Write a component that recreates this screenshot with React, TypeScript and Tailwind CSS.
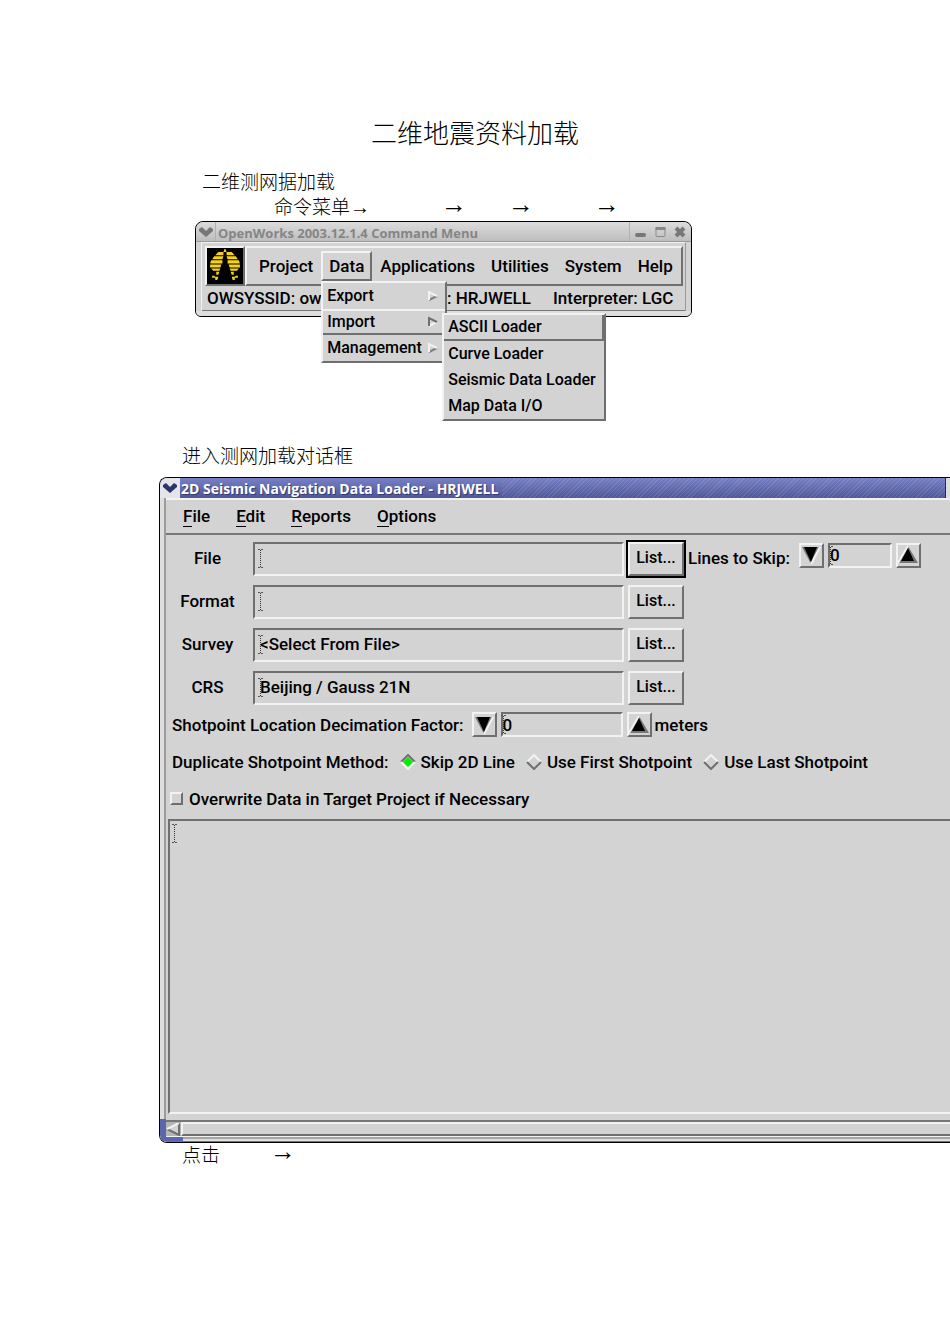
import React, { useState } from 'react';
import clsx from 'clsx';

const uiFont = 'font-[Roboto,"Liberation_Sans",sans-serif]';
const titleFont = 'font-["Open_Sans","DejaVu_Sans",sans-serif]';
const docFont = 'font-["Liberation_Serif","Noto_Sans_CJK_SC",serif]';

// Bordas 3D no estilo Motif
const raised = 'border-2 border-t-[#f2f2f2] border-l-[#f2f2f2] border-r-[#6f6f6f] border-b-[#6f6f6f]';
const sunken = 'border-2 border-t-[#6f6f6f] border-l-[#6f6f6f] border-r-[#f2f2f2] border-b-[#f2f2f2]';

const exportMenu = ['Export', 'Import', 'Management'];
const importMenu = ['ASCII Loader', 'Curve Loader', 'Seismic Data Loader', 'Map Data I/O'];
const methods = ['Skip 2D Line', 'Use First Shotpoint', 'Use Last Shotpoint'];

const Chevron: React.FC<{ className: string }> = ({ className }) => (
  <svg viewBox="0 0 14 10" className={clsx('h-[10px] w-[14px]', className)} aria-hidden>
    <path d="M0 2 3 0 7 4 11 0 14 2V4L7 10 0 4Z" fill="currentColor" />
  </svg>
);

const Logo = () => (
  <svg viewBox="0 0 35 35" className="h-full w-full" aria-hidden>
    <rect width="35" height="35" fill="#000" />
    <g fill="#f5d11c">
      <path d="M17 1h1l1 3h-3z" />
      <path d="M11 4h5v3H8zM19 4h5l3 3h-8z" />
      <path d="M7 8h9l-1 3H5zM19 8h9l2 3H20z" />
      <path d="M4 12h11v3H3zM20 12h11l1 3H20z" />
      <path d="M3 16h11l-1 3H3zM21 16h11v3H22z" />
      <path d="M4 20h9l-1 2H6zM22 20h9l-2 2h-6z" />
      <path d="M9 23h3l-1 3H9zM23 23h3v3h-2z" />
      <path d="M5 27h2l1 1h3l-1 3H8v-2H5zM30 27h-2l-1 1h-3l1 3h2v-2h3z" />
    </g>
  </svg>
);

const MenuArrow: React.FC<{ pressed?: boolean }> = ({ pressed }) => (
  <svg viewBox="0 0 10 12" className="h-3 w-[10px] shrink-0" fill="none" strokeWidth="2" aria-hidden>
    <path d="M9 6 1 10" stroke={pressed ? '#f2f2f2' : '#808080'} />
    <path d="M1 10V2L9 6" stroke={pressed ? '#6f6f6f' : '#f2f2f2'} />
  </svg>
);

const Caret: React.FC<{ className?: string }> = ({ className }) => (
  <svg viewBox="0 0 5 19" className={clsx('pointer-events-none absolute h-[19px] w-[5px]', className)} aria-hidden>
    <path d="M2.5 1V18" stroke="#333" strokeDasharray="1 1" />
    <path d="M0 .5H2M3 .5H5M0 18.5H2M3 18.5H5" stroke="#555" />
  </svg>
);

const StepButton: React.FC<{ up?: boolean; label: string; onClick: () => void }> = ({ up, label, onClick }) => (
  <button type="button" aria-label={label} onClick={onClick} className={clsx('flex h-[25px] w-[25px] shrink-0 items-center justify-center', raised)}>
    <svg viewBox="0 0 20 20" className="h-5 w-5" aria-hidden>
      {up ? (
        <>
          <path d="M10 1 20 18H0Z" fill="#777" />
          <path d="M10 1 0 18" stroke="#f2f2f2" strokeWidth="2" />
          <path d="M10 3 16 16H3Z" fill="#000" />
        </>
      ) : (
        <>
          <path d="M1 2H19L10 19Z" fill="#777" />
          <path d="M19 2 10 19" stroke="#f2f2f2" strokeWidth="2" />
          <path d="M3 2H16L10 17Z" fill="#000" />
        </>
      )}
    </svg>
  </button>
);

const Stepper: React.FC<{ id: string; name: string; width: string }> = ({ id, name, width }) => {
  const [value, setValue] = useState(0);
  return (
    <div className="flex items-center gap-1">
      <StepButton label={`${name} -`} onClick={() => setValue((v) => Math.max(0, v - 1))} />
      <div className={clsx('relative h-[25px]', sunken, width)}>
        <Caret className="-left-0.5 top-px" />
        <input
          id={id}
          value={value}
          onChange={(e) => setValue(Number(e.target.value) || 0)}
          className="block h-full w-full bg-transparent outline-none"
        />
      </div>
      <StepButton up label={`${name} +`} onClick={() => setValue((v) => v + 1)} />
    </div>
  );
};

const FieldRow: React.FC<{ label: string; initial?: string; active?: boolean; children?: React.ReactNode }> = ({
  label,
  initial = '',
  active,
  children,
}) => {
  const [value, setValue] = useState(initial);
  const id = `field-${label.toLowerCase()}`;
  return (
    <div className="flex h-[34px] items-center">
      <label htmlFor={id} className="w-[83px] shrink-0 pb-0.5 text-center">
        {label}
      </label>
      <div className={clsx('relative ml-1 h-full w-[371px] shrink-0', sunken)}>
        <Caret className="left-[3px] top-[5px]" />
        <input
          id={id}
          value={value}
          onChange={(e) => setValue(e.target.value)}
          className="block h-full w-full bg-transparent pb-0.5 pl-[5px] outline-none"
        />
      </div>
      <button type="button" className={clsx('ml-1 h-full w-14 shrink-0 pb-0.5 text-base', raised, active && 'outline-2 outline-black')}>
        List...
      </button>
      {children}
    </div>
  );
};

const CommandMenu = () => (
  <section className={clsx('ml-[195px] w-[497px] rounded-t-lg rounded-b-md border border-black bg-[#d3d3d3] text-[17px] leading-6 font-medium', uiFont)}>
    <header className="flex h-5 items-center rounded-t-lg border-b border-[#999] bg-linear-to-b from-[#dcdcdc] to-[#bebebe] text-[#858585]">
      <div className="flex h-full w-5 items-center justify-center border-r border-[#b0b0b0]">
        <Chevron className="text-[#777]" />
      </div>
      <h2 className={clsx('ml-0.5 flex-1 pt-0.5 text-[13px] leading-5 font-bold', titleFont)}>OpenWorks 2003.12.1.4 Command Menu</h2>
      <div className="flex h-full w-[62px] items-center justify-between border-l border-[#b0b0b0] px-[5px]">
        <svg viewBox="0 0 12 12" className="h-3 w-3" aria-hidden>
          <rect x="0" y="7" width="11" height="4" rx="2" fill="#777" />
        </svg>
        <svg viewBox="0 0 12 12" className="h-3 w-3" aria-hidden>
          <rect x="1" y="1.5" width="9" height="9" rx="1" fill="none" stroke="#888" />
          <path d="M.5 1H10.500V4H.5Z" fill="#888" />
        </svg>
        <svg viewBox="0 0 12 12" className="h-3 w-3" aria-hidden>
          <path d="M2 2 10 10M10 2 2 10" stroke="#777" strokeWidth="4" />
        </svg>
      </div>
    </header>
    <div className="mx-[5px] border-x border-t border-[#999] border-t-[#f2f2f2] border-l-[#f2f2f2]">
      <div className="mx-[3px] mt-[3px] flex h-10">
        <div className={clsx('w-10 shrink-0', raised)}>
          <Logo />
        </div>
        <nav className={clsx('flex flex-1 items-center pl-1', raised)}>
          <button type="button" className="px-2">Project</button>
          <div className="relative">
            <button type="button" className={clsx('flex h-[30px] items-center px-[6px]', raised)}>Data</button>
            <ul className={clsx('absolute top-[30px] left-0 z-10 w-[126px] bg-[#d3d3d3] text-base', raised)}>
              {exportMenu.map((item) => (
                <li key={item}>
                  <button
                    type="button"
                    className={clsx('flex h-[26px] w-full items-center justify-between pr-[7px] pl-1', item === 'Import' && 'border-y-2 border-t-[#f2f2f2] border-b-[#6f6f6f]')}
                  >
                    {item}
                    <MenuArrow pressed={item === 'Import'} />
                  </button>
                </li>
              ))}
            </ul>
            <ul className={clsx('absolute top-[62px] left-[121px] z-20 w-[164px] bg-[#d3d3d3] text-base', raised)}>
              {importMenu.map((item, i) => (
                <li key={item}>
                  <button type="button" className={clsx('flex h-[26px] w-full items-center pl-1 whitespace-nowrap', i === 0 && 'border-r-2 border-b-2 border-[#6f6f6f]')}>
                    {item}
                  </button>
                </li>
              ))}
            </ul>
          </div>
          <button type="button" className="px-2">Applications</button>
          <button type="button" className="px-2">Utilities</button>
          <button type="button" className="px-2">System</button>
          <button type="button" className="px-2">Help</button>
        </nav>
      </div>
      <div className="flex h-[25px] items-center border-b border-[#777] pl-[5px]">
        <span className="w-[240px]">OWSYSSID: ow</span>
        <span className="w-[106px]">: HRJWELL</span>
        <span>Interpreter: LGC</span>
      </div>
    </div>
    <div className="h-[5px] rounded-b-md bg-[#dedede]" />
  </section>
);

const NavigationLoader = () => {
  const [method, setMethod] = useState(methods[0]);
  const [overwrite, setOverwrite] = useState(false);

  return (
    <section className={clsx('ml-[159px] overflow-hidden rounded-l-lg border border-r-0 border-black bg-[#d3d3d3] text-[17px] leading-6 font-medium whitespace-nowrap', uiFont)}>
      <header className="flex h-5 items-center bg-linear-to-b from-[#7880c6] to-[#505798] text-white">
        <div className="flex h-full w-5 items-center justify-center bg-[#e4e4ea]">
          <Chevron className="text-[#2c3468]" />
        </div>
        <h2 className={clsx('ml-px pt-0.5 text-sm font-bold text-shadow-[1px_1px_0_#333a70]', titleFont)}>2D Seismic Navigation Data Loader - HRJWELL</h2>
        <div className="ml-1 h-full flex-1 bg-[repeating-linear-gradient(135deg,#ffffff1a_0_1px,transparent_1px_3px)]" />
        <div className="h-full w-[5px] border-l border-[#222a60] bg-[#dcdce4]" />
      </header>
      <div className="flex">
        <div className="flex w-[6px] shrink-0 flex-col border-r-2 border-[#9c9c9c] bg-[#dedede]">
          <div className="mt-auto h-[18px] w-[6px] bg-[#5b66ae]" />
        </div>
        <div className="min-w-0 flex-1">
          <nav className="flex h-[37px] items-center gap-[26px] border-t-2 border-b-2 border-t-[#f2f2f2] border-b-[#777] pb-0.5 pl-[17px]">
            {['File', 'Edit', 'Reports', 'Options'].map((item) => (
              <button key={item} type="button">
                <span className="border-b border-black">{item[0]}</span>
                {item.slice(1)}
              </button>
            ))}
          </nav>
          <div className="flex flex-col gap-[9px] pt-[7px]">
            <FieldRow label="File" active>
              <label htmlFor="skip" className="ml-1 pb-0.5">Lines to Skip:</label>
              <div className="mb-2 ml-[9px]">
                <Stepper id="skip" name="Lines to Skip" width="w-[64px]" />
              </div>
            </FieldRow>
            <FieldRow label="Format" />
            <FieldRow label="Survey" initial="<Select From File>" />
            <FieldRow label="CRS" initial="Beijing / Gauss 21N" />
          </div>
          <div className="mt-[7px] flex h-[25px] items-center pl-[6px]">
            <label htmlFor="factor">Shotpoint Location Decimation Factor:</label>
            <div className="mr-[3px] ml-2">
              <Stepper id="factor" name="Factor" width="w-[122px]" />
            </div>
            meters
          </div>
          <fieldset className="mt-3 flex h-[25px] items-center pl-[6px]">
            <legend className="float-left">Duplicate Shotpoint Method:</legend>
            {methods.map((m) => (
              <label key={m} className="ml-[11px] flex items-center gap-[5px]">
                <input type="radio" name="method" checked={method === m} onChange={() => setMethod(m)} className="sr-only" />
                <svg viewBox="0 0 16 16" className="h-4 w-4" fill="none" strokeWidth="2" aria-hidden>
                  {method === m && <path d="M8 3 13 8 8 13 3 8Z" fill="#00f000" />}
                  <path d="M1 8 8 1 15 8" stroke={method === m ? '#6f6f6f' : '#f2f2f2'} />
                  <path d="M1 8 8 15 15 8" stroke={method === m ? '#f2f2f2' : '#6f6f6f'} />
                </svg>
                {m}
              </label>
            ))}
          </fieldset>
          <label className="mt-3 flex h-[25px] items-center gap-[6px] pl-1">
            <input
              type="checkbox"
              checked={overwrite}
              onChange={(e) => setOverwrite(e.target.checked)}
              className={clsx('h-[13px] w-[13px] appearance-none checked:bg-[#6f6f6f]', raised)}
            />
            Overwrite Data in Target Project if Necessary
          </label>
          <div className={clsx('relative mt-2 ml-0.5 h-[295px] border-r-0', sunken)}>
            <Caret className="top-[3px] left-0.5" />
            <textarea aria-label="Log" className="block h-full w-full resize-none bg-transparent pl-2 outline-none" />
          </div>
          <div className="mt-[6px] flex h-[17px] border-t-2 border-b border-t-[#777] border-b-[#f2f2f2]">
            <button type="button" aria-label="Scroll left" className="w-[15px] shrink-0 bg-[#b5b5b5]">
              <svg viewBox="0 0 15 13" className="h-[13px] w-[15px]" aria-hidden>
                <path d="M1 6 13 0V12Z" fill="#d3d3d3" />
                <path d="M13 0V12L1 6" fill="none" stroke="#6f6f6f" strokeWidth="2" />
                <path d="M1 6 13 0" stroke="#f2f2f2" strokeWidth="2" />
              </svg>
            </button>
            <div className={clsx('flex-1 border-r-0', raised)} />
          </div>
        </div>
      </div>
      <div className="flex h-[5px] border-b border-[#777] bg-[#dedede]">
        <div className="w-[23px] bg-[#5b66ae]" />
        <div className="flex-1 border-t-2 border-[#a5a5a5]" />
      </div>
    </section>
  );
};

const App = () => (
  <main className={clsx('min-h-screen overflow-hidden bg-white pt-[115px] text-[19px] font-light text-black', docFont)}>
    <h1 className="text-center text-[26px] leading-10 font-light">二维地震资料加载</h1>
    <h2 className="mt-[15px] ml-[202px] leading-[26px] font-light">二维测网据加载</h2>
    <p className="ml-[274px] flex h-[25px] items-center">
      <span>命令菜单</span>
      <span className="pb-1 text-xl leading-5">→</span>
      <span className="ml-[71px] pb-2 text-[26px] leading-5">→</span>
      <span className="ml-[41px] pb-2 text-[26px] leading-5">→</span>
      <span className="ml-[60px] pb-2 text-[26px] leading-5">→</span>
    </p>
    <CommandMenu />
    <p className="mt-[127px] ml-[182px] leading-[26px]">进入测网加载对话框</p>
    <div className="mt-[7px]">
      <NavigationLoader />
    </div>
    <p className="ml-[182px] flex h-[26px] items-center">
      <span>点击</span>
      <span className="ml-[50px] pb-2 text-[26px] leading-5">→</span>
    </p>
  </main>
);

export default App;
